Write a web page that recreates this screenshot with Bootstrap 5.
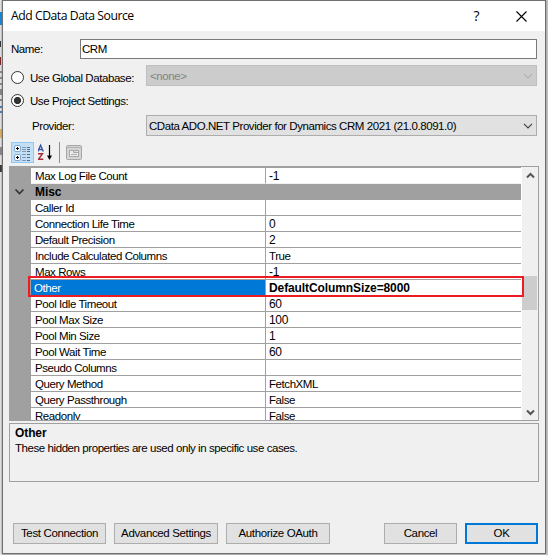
<!DOCTYPE html>
<html lang="en">
<head>
<meta charset="utf-8">
<title>Add CData Data Source</title>
<link href="https://cdn.jsdelivr.net/npm/bootstrap@5.3.0/dist/css/bootstrap.min.css" rel="stylesheet">
<style>
body{width:548px;height:555px;background:#c9c9c9;font:11.5px/16px "Liberation Sans",Arial,sans-serif;letter-spacing:-.43px;color:#000;overflow:hidden}
svg{display:block;flex:none}
label{white-space:nowrap}
.behind{width:2px;height:555px}
.dialog{width:544px;height:554px;border:1px solid #6f6f6f;background:#f0f0f0;box-shadow:0 0 2px #777}
.titlebar{height:30px;padding:0 18px 0 8px;font:12.2px/30px "Open Sans","Noto Sans",sans-serif;letter-spacing:-.46px}
.titlebar .help{margin-right:37px;font-size:14px}
.field-name{margin:8px 8px 0;height:20px}
.field-global{margin:6px 8px 0;height:21px}
.field-project{margin:6px 8px 0;height:17px}
.field-provider{margin:6px 8px 0;height:21px}
.lbl-name{width:69px}
.lbl-source{width:135px}
.lbl-provider{width:135px;padding-left:21px}
.box{height:100%;border:1px solid #adadad;background:#e1e1e1;border-radius:0;padding:0 3px 0 2px}
.box-input{background:#fff;border-color:#7a7a7a;padding-left:1px}
.box-off{background:#ccc;border-color:#bfbfbf;color:#838383;padding-left:3px}
.radio{width:13px;height:13px;margin:0 6px 0 0;border:1px solid #333;border-radius:50%;background:#fff;flex:none}
.radio-on{background:radial-gradient(circle,#333 0 3.2px,#fff 4px)}
.tools{height:30px;padding:6px 8px 0}
.tool-on{width:23px;height:21px;background:#c2dff6;border:1px solid #90c8f6}
.tool-sep{width:1px;height:21px;background:#8d8d8d;margin:0 6px 0 5px}
.propgrid{width:530px;height:255px;margin-left:6px;border:1px solid #a0a0a0;background:#fff}
.rows{width:511px;margin-right:1px;border-top:1px solid #a0a0a0}
.prop{height:16px;border-left:21px solid #a0a0a0}
.prop>div{border-bottom:1px solid #a0a0a0;line-height:17px;height:16px;white-space:nowrap}
.prop .key{width:235px;padding-left:4px;border-right:1px solid #a0a0a0}
.prop .val{padding-left:3px}
.prop .num{font-size:12px;letter-spacing:-.3px}
.prop-first>div{border-bottom-color:#f0f0f0}
.group{height:16px;background:#a0a0a0;line-height:17px}
.group svg{margin:0 10px 0 4px}
.prop .picked{background:#0078d7;color:#fff;padding-left:3px}
.heavy{font-weight:700;font-size:12px;letter-spacing:-.1px}
.scroller{width:16px;background:#f0f0f0;padding:5px 0 4px}
.thumb{width:15px;height:34px;margin:97px 1px 0 0;background:#cdcdcd}
.outline-red{left:28px;top:276px;width:496px;height:21px;border:2px solid #ed1c24}
.about{width:530px;height:59px;margin:2px 0 0 6px;border:1px solid #a0a0a0;padding:2px 5px}
.about p{margin:0;line-height:15px}
.actions{height:21px;margin:41px 7px 0 10px;gap:8px}
.push{height:21px;border:1px solid #adadad;border-radius:0;background:#e1e1e1;padding:0;font-size:11.5px;line-height:19px;letter-spacing:-.36px;color:#000;white-space:nowrap}
.w-test{width:93px}.w-mid{width:104px}.w-end{width:73px}
.push-main{border:2px solid #0078d7;line-height:17px}
</style>
</head>
<body>
<div class="d-flex position-relative">
<svg class="behind" viewBox="0 0 2 555" shape-rendering="crispEdges"><path fill="#e6e6e6" d="M0 0h2v555H0z"/><path fill="#0888e0" d="M0 12h2v13H0z"/><path fill="#333" d="M0 41h1v6H0zM0 165h2v7H0z"/><path fill="#7c2020" d="M0 57h1v8H0z"/><path fill="#888" d="M0 71h2v2H0zM0 77h2v2H0zM0 83h2v2H0zM0 89h2v6H0zM0 99h2v2H0zM0 147h2v8H0z"/><path fill="#4a78bb" d="M0 106h2v2H0zM0 111h2v2H0z"/><path fill="#dfb35f" d="M0 129h2v9H0z"/></svg>
<main class="dialog">
  <header class="titlebar bg-white d-flex align-items-center">
    <span class="me-auto">Add CData Data Source</span><span class="help">?</span>
    <svg width="11" height="11" viewBox="0 0 11 11" fill="none" stroke="#000" stroke-width="1.1"><path d="M.5.5l10 10M10.5.5l-10 10"/></svg>
  </header>
  <div class="field-name d-flex align-items-center"><label class="lbl-name">Name:</label><div class="box box-input flex-fill d-flex align-items-center">CRM</div></div>
  <div class="field-global d-flex align-items-center">
    <label class="lbl-source d-flex align-items-center pt-1"><i class="radio"></i>Use Global Database:</label>
    <div class="box box-off flex-fill d-flex align-items-center justify-content-between">&lt;none&gt;<svg width="10" height="6" viewBox="0 0 10 6" fill="none" stroke="#a0a0a0"><path d="M1 .8l4 4 4-4"/></svg></div>
  </div>
  <div class="field-project d-flex align-items-center"><label class="d-flex align-items-center"><i class="radio radio-on"></i>Use Project Settings:</label></div>
  <div class="field-provider d-flex align-items-center">
    <label class="lbl-provider">Provider:</label>
    <div class="box flex-fill d-flex align-items-center justify-content-between">CData ADO.NET Provider for Dynamics CRM 2021 (21.0.8091.0)<svg width="10" height="6" viewBox="0 0 10 6" fill="none" stroke="#444" stroke-width="1.2"><path d="M1 .8l4 4 4-4"/></svg></div>
  </div>
  <div class="tools d-flex">
    <span class="tool-on"><svg width="21" height="19" viewBox="0 0 21 19"><rect x="2.500" y="2.500" width="6" height="6" rx="1.500" fill="#fff" stroke="#7fa5d0"/><rect x="2.500" y="11.500" width="6" height="6" rx="1.500" fill="#fff" stroke="#7fa5d0"/><path stroke="#000" d="M4 5.500h3M5.500 4v3M4 14.500h3M5.500 13v3"/><path stroke="#8497ad" d="M10 4.500h4M10 6.500h4M10 8.500h4M10 11.500h4M10 14.500h4M10 17.500h4"/><path stroke="#506b90" d="M15 4.500h3M15 6.500h3M15 8.500h3M15 11.500h3M15 14.500h3M15 17.500h3"/></svg></span>
    <svg class="ms-1" width="16" height="21" viewBox="0 0 16 21"><path fill="none" stroke="#3453a8" stroke-width="1.300" d="M-.1 9.500L2.600 3.200l2.700 6.300M.8 7.500h3.800"/><path fill="none" stroke="#a22e36" stroke-width="1.400" d="M0 11.700h4.500L.4 17.300h4.900"/><path stroke="#000" stroke-width="1.200" d="M11.500 3v12"/><path fill="#000" d="M9 13.500h5L11.500 18z"/></svg>
    <span class="tool-sep"></span>
    <svg width="16" height="21" viewBox="0 0 16 21"><rect x=".5" y="3.500" width="15" height="14" rx="1" fill="#d4d4d4" stroke="#a6a6a6"/><path stroke="#b4b4b4" d="M1 5.500h14"/><path fill="#ececec" stroke="#a6a6a6" d="M3.500 8.500h4v2h5v4h-9zM8 8.500h4.500v2"/><path stroke="#b0b0b0" d="M5 12.500h6"/></svg>
  </div>
  <section class="propgrid d-flex">
    <div class="rows overflow-hidden">
      <div class="prop prop-first d-flex"><div class="key">Max Log File Count</div><div class="val num flex-fill">-1</div></div>
      <div class="group d-flex align-items-center"><svg width="11" height="8" viewBox="0 0 11 8" fill="none" stroke="#333" stroke-width="1.700"><path d="M1.500 1.500l4 4 4-4"/></svg><b class="heavy">Misc</b></div>
      <div class="prop d-flex"><div class="key">Caller Id</div><div class="val flex-fill"></div></div>
      <div class="prop d-flex"><div class="key">Connection Life Time</div><div class="val num flex-fill">0</div></div>
      <div class="prop d-flex"><div class="key">Default Precision</div><div class="val num flex-fill">2</div></div>
      <div class="prop d-flex"><div class="key">Include Calculated Columns</div><div class="val flex-fill">True</div></div>
      <div class="prop d-flex"><div class="key">Max Rows</div><div class="val num flex-fill">-1</div></div>
      <div class="prop d-flex"><div class="key picked">Other</div><div class="val heavy flex-fill">DefaultColumnSize=8000</div></div>
      <div class="prop d-flex"><div class="key">Pool Idle Timeout</div><div class="val num flex-fill">60</div></div>
      <div class="prop d-flex"><div class="key">Pool Max Size</div><div class="val num flex-fill">100</div></div>
      <div class="prop d-flex"><div class="key">Pool Min Size</div><div class="val num flex-fill">1</div></div>
      <div class="prop d-flex"><div class="key">Pool Wait Time</div><div class="val num flex-fill">60</div></div>
      <div class="prop d-flex"><div class="key">Pseudo Columns</div><div class="val flex-fill"></div></div>
      <div class="prop d-flex"><div class="key">Query Method</div><div class="val flex-fill">FetchXML</div></div>
      <div class="prop d-flex"><div class="key">Query Passthrough</div><div class="val flex-fill">False</div></div>
      <div class="prop d-flex"><div class="key">Readonly</div><div class="val flex-fill">False</div></div>
    </div>
    <div class="scroller d-flex flex-column align-items-center">
      <svg width="9" height="7" viewBox="0 0 9 7" fill="none" stroke="#555" stroke-width="2"><path d="M1 5.500L4.500 2 8 5.500"/></svg>
      <div class="thumb"></div>
      <svg class="mt-auto" width="9" height="7" viewBox="0 0 9 7" fill="none" stroke="#555" stroke-width="2"><path d="M1 1.500L4.500 5 8 1.500"/></svg>
    </div>
  </section>
  <section class="about"><p class="heavy">Other</p><p>These hidden properties are used only in specific use cases.</p></section>
  <footer class="actions d-flex">
    <button class="btn push w-test">Test Connection</button><button class="btn push w-mid">Advanced Settings</button><button class="btn push w-mid">Authorize OAuth</button>
    <button class="btn push w-end ms-auto">Cancel</button><button class="btn push push-main w-end">OK</button>
  </footer>
</main>
<div class="outline-red position-absolute"></div>
</div>
<script src="https://cdn.jsdelivr.net/npm/bootstrap@5.3.0/dist/js/bootstrap.bundle.min.js"></script>
</body>
</html>
